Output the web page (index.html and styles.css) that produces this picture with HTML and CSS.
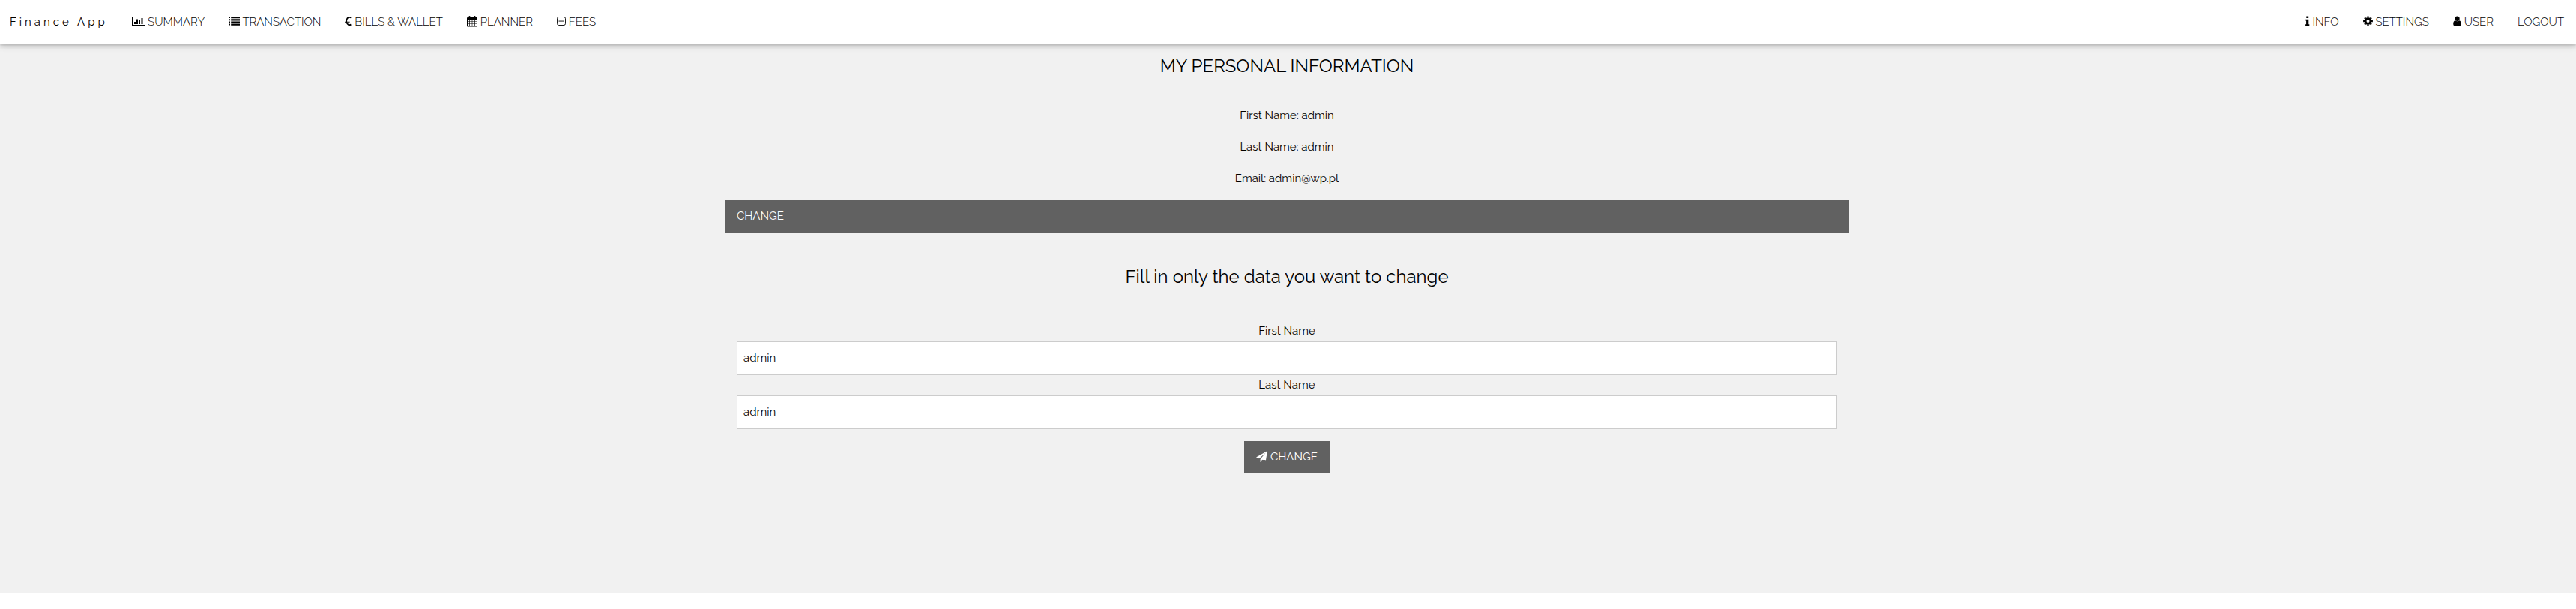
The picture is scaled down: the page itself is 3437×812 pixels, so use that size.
FILE: index.html
```
<!DOCTYPE html>
<html lang="en">
<head>
<meta charset="utf-8">
<title>Finance App</title>
<link rel="stylesheet" href="styles.css">
</head>
<body>
<nav class="nav">
  <a class="brand">Finance App</a>
  <a class="item"><svg class="icon" width="17" height="15" viewBox="0 0 17 15"><path d="M0 1h1v11h16v1H0zM3 8h2v3H3zM6 4.500h2V11H6zM9 6h2v5H9zM12.500 3h2v8h-2z"/></svg> SUMMARY</a>
  <a class="item"><svg class="icon" width="15" height="15" viewBox="0 0 15 15"><path d="M0 1h2v2H0zM3.200 1H15v2.200H3.200zM0 4.200h2v2H0zM3.200 4.200H15v2.200H3.200zM0 7.400h2v2H0zM3.200 7.400H15v2.200H3.200zM0 10.600h2v2H0zM3.200 10.600H15v2.200H3.200z"/></svg> TRANSACTION</a>
  <a class="item"><svg class="icon" width="9" height="15" viewBox="0 0 9 15"><path d="M8.400 2.400Q4.200.6 2.500 5 1.800 7 2.500 9q1.700 4.400 5.900 2.600" fill="none" stroke="#000" stroke-width="1.800"/><path d="M0 5h7.400l-.3 1.100H0zM0 7.700h6.800l-.3 1.100H0z"/></svg> BILLS &amp; WALLET</a>
  <a class="item"><svg class="icon" width="14" height="15" viewBox="0 0 14 15"><path fill-rule="evenodd" d="M1 2h1.500V1q0-1 1-1t1 1v1h5V1q0-1 1-1t1 1v1H13q1 0 1 1v10.500q0 1-1 1H1q-1 0-1-1V3q0-1 1-1zM1 5v2.500h2.300V5zM4 5v2.500h2.700V5zM7.300 5v2.500H10V5zM10.700 5v2.500H13V5zM1 8.100v2.300h2.300V8.100zM4 8.100v2.300h2.700V8.100zM7.300 8.100v2.300H10V8.100zM10.700 8.100v2.300H13V8.100zM1 11v2.500h2.300V11zM4 11v2.500h2.700V11zM7.300 11v2.500H10V11zM10.700 11v2.500H13V11z"/></svg> PLANNER</a>
  <a class="item"><svg class="icon" width="12" height="15" viewBox="0 0 12 15"><rect x=".5" y="1.500" width="11" height="11" rx="2.200" fill="none" stroke="#000" stroke-width=".9"/><path d="M2.500 6.600h7v.9h-7z"/></svg> FEES</a>
  <span class="spacer"></span>
  <a class="item"><svg class="icon" width="6" height="15" viewBox="0 0 6 15"><path d="M1.300.5h2.900v2.400H1.300zM.3 4.700h4v6.500h1v1.700H.1v-1.700h1V6.400H.3z"/></svg> INFO</a>
  <a class="item"><svg class="icon" width="13" height="15" viewBox="0 0 13 15"><circle cx="6.500" cy="7" r="3.400" fill="none" stroke="#000" stroke-width="2.800"/><path stroke="#000" stroke-width="2.300" d="M6.500.6v2M6.500 11.400v2M.1 7h2M10.900 7h2M2 2.500l1.400 1.400M9.600 10.100l1.400 1.400M2 11.500l1.400-1.400M9.600 3.900L11 2.500"/></svg> SETTINGS</a>
  <a class="item"><svg class="icon" width="11" height="15" viewBox="0 0 11 15"><circle cx="5.500" cy="3.800" r="3.200"/><path d="M2.700 6.300q2.800 2 5.600 0Q10.800 6.700 10.800 11q0 2.200-2 2.200H2.200q-2 0-2-2.200 0-4.300 2.500-4.700z"/></svg> USER</a>
  <a class="item">LOGOUT</a>
</nav>
<main class="page">
  <section class="content">
    <h3 class="title">MY PERSONAL INFORMATION</h3>
    <div class="details">
      <p class="detail">First Name: admin</p>
      <p class="detail">Last Name: admin</p>
      <p class="detail">Email: admin@wp.pl</p>
    </div>
    <div class="bar">CHANGE</div>
    <form class="form">
      <h3 class="subtitle">Fill in only the data you want to change</h3>
      <label class="label" for="first">First Name</label>
      <input class="input" id="first" value="admin">
      <label class="label" for="last">Last Name</label>
      <input class="input" id="last" value="admin">
      <button class="submit" type="button"><svg class="icon send" width="15" height="15" viewBox="0 0 15 15"><path d="M15 0L12.800 13.500 8.700 11.700 6.500 15H5.600V11L13 2.200 4 10.200 0 8.500z"/></svg> CHANGE</button>
    </form>
  </section>
</main>
</body>
</html>
```
FILE: styles.css
```
* { box-sizing: border-box; }
body {
  margin: 0;
  background: #fff;
  color: #000;
  font: 15px/22.5px Raleway, Lato, sans-serif;
}
.nav {
  position: relative;
  display: flex;
  align-items: center;
  height: 59px;
  background: #fff;
  box-shadow: 0 2px 5px rgba(0, 0, 0, .18), 0 2px 10px rgba(0, 0, 0, .14);
}
.brand { padding: 0 16px 0 13px; letter-spacing: 4px; }
.brand + .item { margin-left: 0.5px; }
.item { padding: 0 16px; white-space: nowrap; font-weight: 300; }
.spacer { flex: 1; }
.icon { display: inline-block; vertical-align: -2px; fill: #000; }
.page { height: 732px; background: #f1f1f1; padding: 11px 3px 0 0; }
.content { width: 1500px; margin: 0 auto; text-align: center; }
.title, .subtitle { margin: 0; font-size: 24px; line-height: 36px; font-weight: 400; }
.details { padding-top: 37px; }
.detail { margin: 0 0 19.5px; }
.detail:last-child { margin-bottom: 17.5px; }
.bar {
  height: 43px;
  padding: 10px 16px;
  background: #616161;
  color: #fff;
  text-align: left;
}
.form { padding: 41px 16px 0; }
.subtitle { margin-bottom: 43px; }
.label { display: block; height: 25px; }
.input {
  display: block;
  width: 100%;
  height: 45px;
  margin-bottom: 2px;
  padding: 8px 8px 9px;
  border: 1px solid #ccc;
  background: #fff;
  color: #000;
  font: inherit;
}
.submit {
  height: 43px;
  margin-top: 14px;
  padding: 0 16px;
  border: 0;
  background: #616161;
  color: #fff;
  font: inherit;
}
.send { fill: #fff; }
```
